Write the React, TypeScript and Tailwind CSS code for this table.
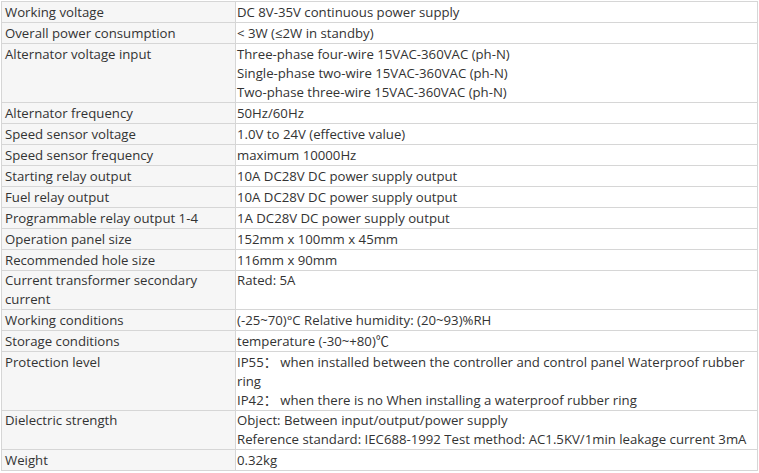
import React from "react";

const rows: [string[], string[]][] = [
  [["Working voltage"], ["DC 8V-35V continuous power supply"]],
  [["Overall power consumption"], ["< 3W (≤2W in standby)"]],
  [
    ["Alternator voltage input"],
    [
      "Three-phase four-wire 15VAC-360VAC (ph-N)",
      "Single-phase two-wire 15VAC-360VAC (ph-N)",
      "Two-phase three-wire 15VAC-360VAC (ph-N)",
    ],
  ],
  [["Alternator frequency"], ["50Hz/60Hz"]],
  [["Speed sensor voltage"], ["1.0V to 24V (effective value)"]],
  [["Speed sensor frequency"], ["maximum 10000Hz"]],
  [["Starting relay output"], ["10A DC28V DC power supply output"]],
  [["Fuel relay output"], ["10A DC28V DC power supply output"]],
  [["Programmable relay output 1-4"], ["1A DC28V DC power supply output"]],
  [["Operation panel size"], ["152mm x 100mm x 45mm"]],
  [["Recommended hole size"], ["116mm x 90mm"]],
  [["Current transformer secondary", "current"], ["Rated: 5A"]],
  [["Working conditions"], ["(-25~70)°C Relative humidity: (20~93)%RH"]],
  [["Storage conditions"], ["temperature (-30~+80)℃"]],
  [
    ["Protection level"],
    [
      "IP55： when installed between the controller and control panel Waterproof rubber",
      "ring",
      "IP42： when there is no When installing a waterproof rubber ring",
    ],
  ],
  [
    ["Dielectric strength"],
    [
      "Object: Between input/output/power supply",
      "Reference standard: IEC688-1992 Test method: AC1.5KV/1min leakage current 3mA",
    ],
  ],
  [["Weight"], ["0.32kg"]],
];

export default function App() {
  return (
    <div
      className="w-[759px] h-[473px] bg-white pt-px pl-px overflow-hidden text-[#333333] text-[13.2px] leading-[19px]"
      style={{ fontFamily: '"Open Sans", "Noto Sans CJK SC", sans-serif' }}
    >
      <table className="w-[757px] border-collapse table-fixed">
        <colgroup>
          <col className="w-[234px]" />
          <col />
        </colgroup>
        <tbody>
          {rows.map(([label, value], i) => {
            const lines = Math.max(label.length, value.length);
            const pad = lines === 2 ? "pt-0" : "pt-px";
            return (
              <tr key={i}>
                <td
                  className={`border border-[#d6d6d6] bg-[#f6f6f6] align-top pl-[3px] pb-0 ${pad}`}
                >
                  {label.map((l, j) => (
                    <div key={j} className="whitespace-nowrap">
                      {l}
                    </div>
                  ))}
                </td>
                <td
                  className={`border border-[#d6d6d6] bg-white align-top pl-px pb-0 ${pad}`}
                >
                  {value.map((v, j) => (
                    <div key={j} className="whitespace-pre">
                      {v}
                    </div>
                  ))}
                </td>
              </tr>
            );
          })}
        </tbody>
      </table>
    </div>
  );
}
